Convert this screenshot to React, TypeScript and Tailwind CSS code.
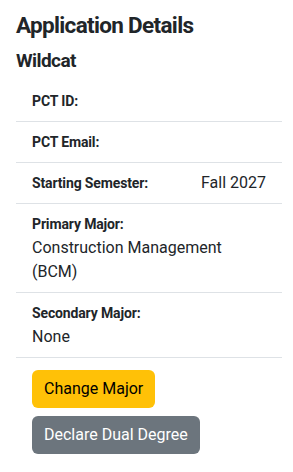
import React from "react";

type Row = {
  label: string;
  value?: string;
  inline?: boolean;
};

const rows: Row[] = [
  { label: "PCT ID:" },
  { label: "PCT Email:" },
  { label: "Starting Semester:", value: "Fall 2027", inline: true },
  { label: "Primary Major:", value: "Construction Management (BCM)" },
  { label: "Secondary Major:", value: "None" },
];

const App = () => {
  return (
    <div className="min-h-[472px] bg-white pt-3 pl-4 pr-[11px] text-[16px] leading-6 text-[#212529] font-['Roboto',sans-serif]">
      <h3 className="mb-[10px] text-[22.5px] leading-[27px] font-bold tracking-[-0.03em]">Application Details</h3>
      <h5 className="mb-2 text-[19px] leading-6 font-bold tracking-[-0.03em]">Wildcat</h5>

      <ul>
        {rows.map((row) =>
          row.inline ? (
            <li key={row.label} className="flex items-center justify-between border-b border-[#dee2e6] px-4 py-2">
              <span className="text-[14px] font-bold tracking-[-0.01em]">{row.label}</span>
              <span>{row.value}</span>
            </li>
          ) : (
            <li key={row.label} className="border-b border-[#dee2e6] px-4 py-2">
              <div className="text-[14px] leading-6 font-bold tracking-[-0.01em]">{row.label}</div>
              {row.value && <div className="pr-8">{row.value}</div>}
            </li>
          )
        )}
      </ul>

      <div className="mt-3 flex flex-col items-start gap-2 pl-4">
        <button className="rounded-md bg-[#ffc107] px-3 py-[7px] text-black">Change Major</button>
        <button className="rounded-md bg-[#6c757d] px-3 py-[7px] text-white">Declare Dual Degree</button>
      </div>
    </div>
  );
};

export default App;
